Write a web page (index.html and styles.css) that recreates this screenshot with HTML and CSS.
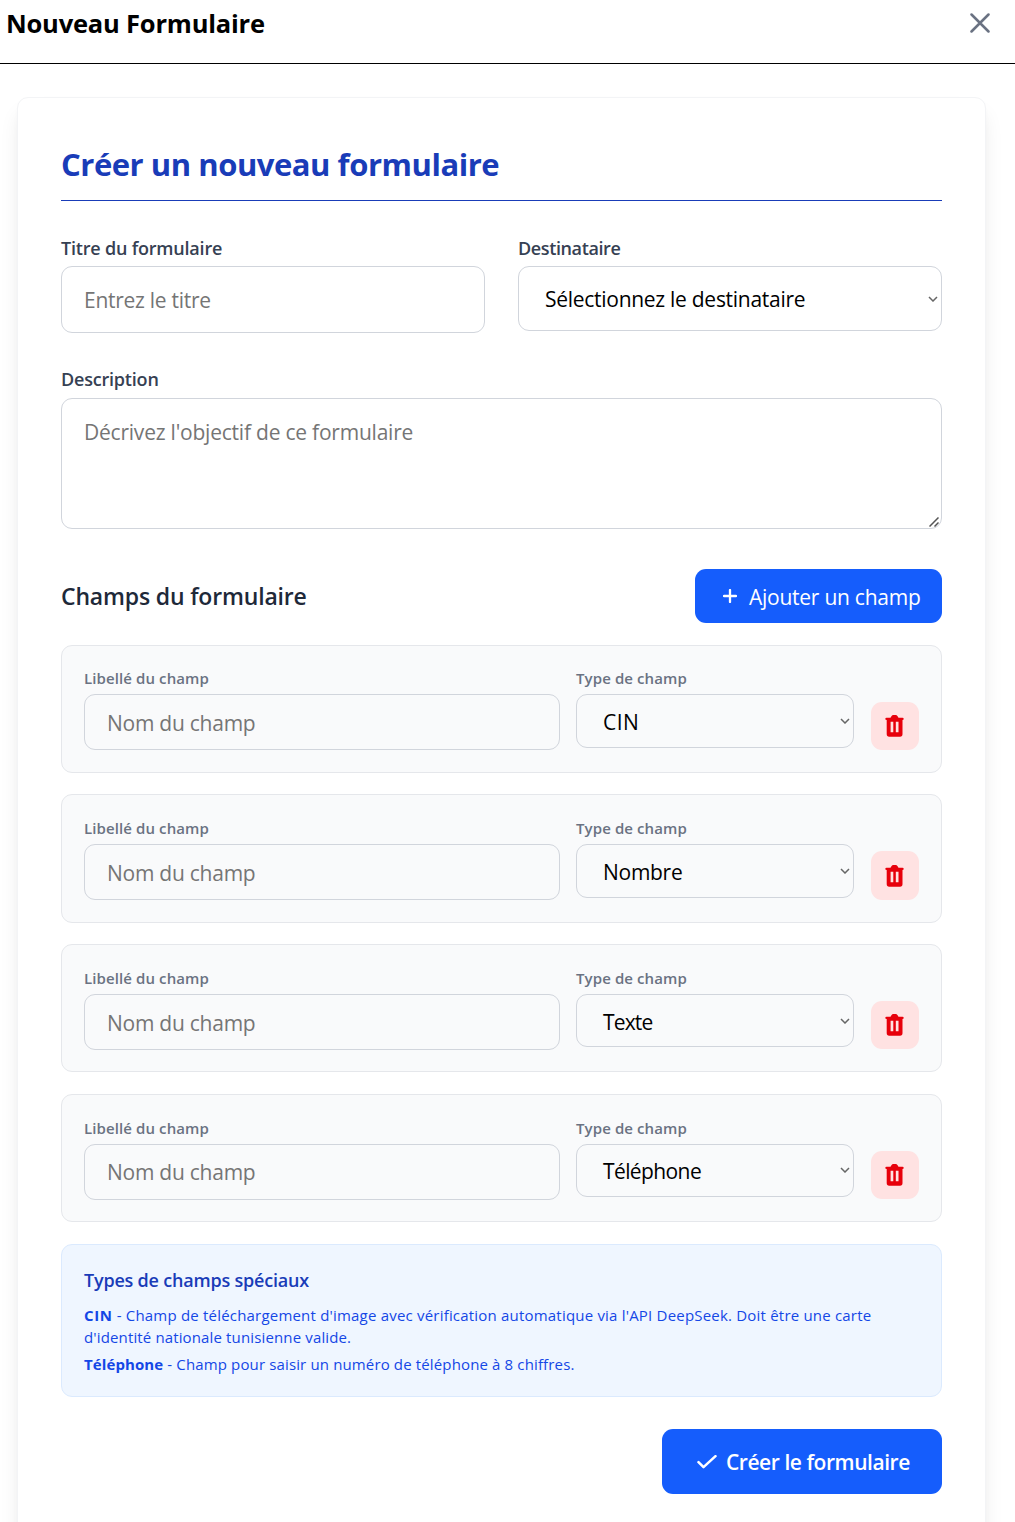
FILE: index.html
```html
<!DOCTYPE html>
<html lang="fr">
<head>
<meta charset="utf-8">
<title>Nouveau Formulaire</title>
<link rel="stylesheet" href="styles.css">
</head>
<body>
<svg class="sprite" aria-hidden="true">
  <symbol id="chevron" viewBox="0 0 10 6"><path d="M1 1l4 4 4-4" fill="none" stroke="#666" stroke-width="1.5"/></symbol>
  <symbol id="trash" viewBox="0 0 20 22"><path fill-rule="evenodd" d="M5.500 2.800 6.600 1Q7.200 0 8.300 0h2.400q1.100 0 1.700 1l1.100 1.800h4q1.200 0 1.200 1.100T17.500 5v14q0 2.700-2.500 2.700H4.200Q1.700 21.700 1.700 19V5Q.3 5 .3 3.900T1.500 2.800zM5.600 6.700v10.600h2.700V6.700zM10.800 6.700v10.600h2.700V6.700z" fill="#e7000b"/></symbol>
</svg>
<header class="topbar">
  <h1 class="topbar-title">Nouveau Formulaire</h1>
  <button class="close" aria-label="Fermer"><svg width="20" height="20" viewBox="0 0 20 20"><path d="M1.500 1.500l17 17M18.500 1.500l-17 17" fill="none" stroke="#6a7282" stroke-width="2.500" stroke-linecap="round"/></svg></button>
</header>
<main class="card">
  <h2 class="card-title">Créer un nouveau formulaire</h2>
  <div class="grid">
    <div class="field">
      <label class="label" for="titre">Titre du formulaire</label>
      <input class="control input" id="titre" placeholder="Entrez le titre">
    </div>
    <div class="field">
      <label class="label label-tight">Destinataire</label>
      <div class="control select"><span>Sélectionnez le destinataire</span><svg class="chevron" width="10" height="6"><use href="#chevron"/></svg></div>
    </div>
  </div>
  <div class="field description">
    <label class="label label-desc" for="desc">Description</label>
    <div class="area-wrap">
      <textarea class="control area" id="desc" placeholder="Décrivez l'objectif de ce formulaire"></textarea>
      <svg class="grip" width="10" height="10" viewBox="0 0 10 10"><path d="M.5 9.500l9-9M5.500 9.500l4-4" fill="none" stroke="#555" stroke-width="1.500"/></svg>
    </div>
  </div>
  <div class="section-head">
    <h3 class="section-title">Champs du formulaire</h3>
    <button class="btn add"><svg width="14" height="14" viewBox="0 0 14 14"><path d="M7 1v12M1 7h12" stroke="#fff" stroke-width="2.300" stroke-linecap="round"/></svg><span>Ajouter un champ</span></button>
  </div>
  <div class="rows">
    <div class="row">
      <div class="field name"><label class="mini">Libellé du champ</label><input class="control small" placeholder="Nom du champ"></div>
      <div class="field type"><label class="mini">Type de champ</label><div class="control select small-select"><span class="caps">CIN</span><svg class="chevron" width="10" height="6"><use href="#chevron"/></svg></div></div>
      <button class="trash" aria-label="Supprimer"><svg width="20" height="22"><use href="#trash"/></svg></button>
    </div>
    <div class="row">
      <div class="field name"><label class="mini">Libellé du champ</label><input class="control small" placeholder="Nom du champ"></div>
      <div class="field type"><label class="mini">Type de champ</label><div class="control select small-select"><span>Nombre</span><svg class="chevron" width="10" height="6"><use href="#chevron"/></svg></div></div>
      <button class="trash" aria-label="Supprimer"><svg width="20" height="22"><use href="#trash"/></svg></button>
    </div>
    <div class="row">
      <div class="field name"><label class="mini">Libellé du champ</label><input class="control small" placeholder="Nom du champ"></div>
      <div class="field type"><label class="mini">Type de champ</label><div class="control select small-select"><span class="tighter">Texte</span><svg class="chevron" width="10" height="6"><use href="#chevron"/></svg></div></div>
      <button class="trash" aria-label="Supprimer"><svg width="20" height="22"><use href="#trash"/></svg></button>
    </div>
    <div class="row">
      <div class="field name"><label class="mini">Libellé du champ</label><input class="control small" placeholder="Nom du champ"></div>
      <div class="field type"><label class="mini">Type de champ</label><div class="control select small-select"><span class="tight">Téléphone</span><svg class="chevron" width="10" height="6"><use href="#chevron"/></svg></div></div>
      <button class="trash" aria-label="Supprimer"><svg width="20" height="22"><use href="#trash"/></svg></button>
    </div>
  </div>
  <section class="info">
    <h4 class="info-title">Types de champs spéciaux</h4>
    <p class="info-text"><span class="wide"><strong>CIN</strong> - Champ de téléchargement d'image avec vérification automatique via l'API DeepSeek. Doit être une carte</span><br>d'identité nationale tunisienne valide.</p>
    <p class="info-text"><strong class="phone">Téléphone</strong> - Champ pour saisir un numéro de téléphone à 8 chiffres.</p>
  </section>
  <div class="actions">
    <button class="btn submit"><svg width="20" height="14" viewBox="0 0 20 14"><path d="M1.500 7.200l5 5L18.500 1.200" fill="none" stroke="#fff" stroke-width="2.500" stroke-linecap="round" stroke-linejoin="round"/></svg><span>Créer le formulaire</span></button>
  </div>
</main>
</body>
</html>
```
FILE: styles.css
```css
* { box-sizing: border-box; }
html { height: 1522px; overflow: hidden; }
body {
  margin: 0;
  height: 1522px;
  overflow: hidden;
  background: #fff;
  color: #000;
  font-family: "Open Sans", "Noto Sans", sans-serif;
}
h1, h2, h3, h4, p { margin: 0; }
button, input, textarea { font: inherit; margin: 0; }
button { border: 0; padding: 0; background: none; }
label { white-space: nowrap; }
.sprite { display: none; }

.topbar {
  display: flex;
  justify-content: space-between;
  align-items: flex-start;
  height: 64px;
  padding: 0 25px 0 6px;
  border-bottom: 1px solid #000;
}
.topbar-title { font-size: 25.5px; line-height: 47px; font-weight: 700; letter-spacing: -0.2px; }
.close { display: flex; margin-top: 13px; }

.card {
  width: 969px;
  height: 1460px;
  margin: 33px 0 0 17px;
  padding: 43px;
  border: 1px solid #f3f4f6;
  border-radius: 11px;
  background: #fff;
  box-shadow: 0 14px 21px -4px rgba(0, 0, 0, .1), 0 5px 8px -5px rgba(0, 0, 0, .1);
}
.card-title {
  height: 60px;
  border-bottom: 1px solid #193cb8;
  color: #193cb8;
  font-size: 31px;
  line-height: 46px;
  font-weight: 700;
  letter-spacing: -0.46px;
}
.grid { display: grid; grid-template-columns: 424px 424px; column-gap: 33px; margin-top: 33px; }
.field { display: flex; flex-direction: column; }
.label { height: 32px; line-height: 29px; font-size: 18px; font-weight: 600; color: #364153; letter-spacing: -0.2px; }
.label-tight { letter-spacing: -0.38px; }
.label-desc { line-height: 27px; }
.control {
  width: 100%;
  border: 1px solid #d1d5dc;
  border-radius: 11px;
  background: transparent;
  font-size: 21px;
  letter-spacing: -0.28px;
  outline: 0;
}
.control::placeholder { color: #757575; opacity: 1; }
.input { height: 67px; padding: 0 22px; }
.select { position: relative; display: flex; align-items: center; height: 65px; padding-left: 26px; }
.chevron { position: absolute; right: 3px; top: 50%; margin-top: -3px; }
.description { margin-top: 33px; }
.area-wrap { position: relative; height: 131px; }
.area { display: block; height: 131px; padding: 16px 22px; line-height: 34px; letter-spacing: -0.22px; resize: none; overflow: hidden; }
.grip { position: absolute; right: 3px; bottom: 2px; }

.section-head { display: flex; justify-content: space-between; align-items: center; margin-top: 40px; height: 54px; }
.section-title { color: #1e2939; font-size: 23px; line-height: 54px; font-weight: 600; letter-spacing: -0.17px; }
.btn { display: flex; align-items: center; border-radius: 11px; background: #155dfc; color: #fff; white-space: nowrap; }
.add { width: 247px; height: 54px; padding-left: 28px; gap: 12px; font-size: 21px; letter-spacing: -0.25px; }
.add span { padding-top: 2px; }

.rows { display: flex; flex-direction: column; gap: 21.5px; margin-top: 21.7px; }
.row {
  display: flex;
  align-items: flex-start;
  height: 128.2px;
  padding: 21px 22px;
  border: 1px solid #e5e7eb;
  border-radius: 11px;
  background: #f9fafb;
}
.name { width: 476px; margin-right: 16px; }
.type { width: 278px; margin-right: 17px; }
.mini { height: 27.75px; padding-top: 0.75px; line-height: 23px; font-size: 15px; font-weight: 600; color: #6a7282; letter-spacing: 0.1px; }
.small { height: 56px; padding: 1.5px 22px 0; letter-spacing: -0.25px; }
.small-select { height: 53.5px; }
.small-select span { padding-top: 2px; }
.small-select .caps { letter-spacing: 0.4px; }
.small-select .tight { letter-spacing: -0.6px; }
.small-select .tighter { letter-spacing: -0.85px; }
.trash {
  display: flex;
  align-items: center;
  justify-content: center;
  width: 48px;
  height: 48.4px;
  margin-top: 35px;
  border-radius: 11px;
  background: #ffe2e2;
}

.info {
  height: 153px;
  margin-top: 22px;
  padding: 22px;
  border: 1px solid #dbeafe;
  border-radius: 11px;
  background: #eff6ff;
}
.info-title { height: 37px; color: #193cb8; font-size: 18px; line-height: 27px; font-weight: 600; letter-spacing: -0.2px; }
.info-text { margin-bottom: 5px; color: #1447e6; font-size: 15px; line-height: 22px; letter-spacing: 0.14px; white-space: nowrap; }
.wide { letter-spacing: 0.2px; }
.wide strong { letter-spacing: 0.6px; }
.phone { letter-spacing: 0.1px; }

.actions { display: flex; justify-content: flex-end; margin-top: 32px; }
.submit { width: 280px; height: 65px; padding-left: 35px; gap: 9px; font-size: 21px; font-weight: 600; letter-spacing: -0.45px; }
.submit svg { margin-top: 1px; }
.submit span { padding-top: 2px; }
```
